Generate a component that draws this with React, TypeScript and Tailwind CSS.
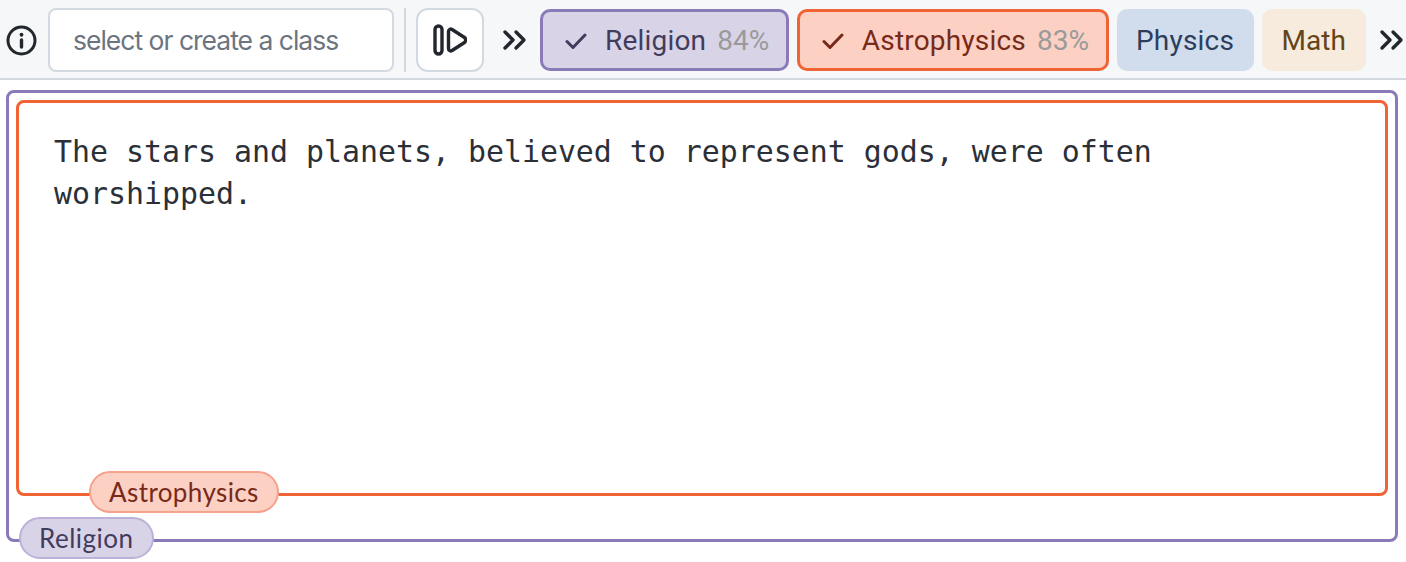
function Chevrons() {
  return (
    <svg width="26" height="22" viewBox="0 0 26 22" fill="none" stroke="#22272e" strokeWidth="3.4" strokeLinecap="round" strokeLinejoin="round" className="shrink-0">
      <path d="M3 3l8 8-8 8" />
      <path d="M14 3l8 8-8 8" />
    </svg>
  );
}

function Check({ color }: { color: string }) {
  return (
    <svg width="22" height="18" viewBox="0 0 22 18" fill="none" stroke={color} strokeWidth="3" strokeLinecap="round" strokeLinejoin="round">
      <path d="M2 9.5l6 6L20 3" />
    </svg>
  );
}

function ScoredChip({ label, score, className, checkColor }: { label: string; score: string; className: string; checkColor: string }) {
  return (
    <div className={`flex h-[62px] shrink-0 items-center rounded-[10px] border-[3px] pl-[22px] pr-[16.5px] pt-[1px] text-[28px] ${className}`}>
      <Check color={checkColor} />
      <span className="ml-[18px] tracking-[0.2px]">{label}</span>
      <span className="ml-[11px] text-[#9a9a9a]">{score}</span>
    </div>
  );
}

export default function App() {
  return (
    <div className="h-[562px] w-[1406px] overflow-hidden bg-white font-['Roboto',sans-serif]">
      <div className="flex h-[80px] items-center border-b-2 border-[#d2d8de] bg-[#f6f7f9] pl-[6px] pt-[2px]">
        <svg width="31" height="31" viewBox="0 0 31 31" fill="none" stroke="#22272e" strokeLinecap="round" className="shrink-0">
          <circle cx="15.5" cy="15.5" r="13.5" strokeWidth="3" />
          <path d="M15.5 15v7" strokeWidth="3.4" />
          <path d="M15.5 9.600v.2" strokeWidth="3.8" />
        </svg>
        <div className="ml-[11px] flex h-[64px] w-[346px] shrink-0 items-center rounded-[8px] border-2 border-[#d2d9e1] bg-white pl-[23px] pt-[1px] font-['Inter',sans-serif] text-[26.5px] tracking-[-1px] text-[#6c757f]">
          select or create a class
        </div>
        <div className="ml-[10px] h-[64px] w-[2px] shrink-0 bg-[#d2d8de]" />
        <div className="ml-[10px] flex h-[64px] w-[68px] shrink-0 items-center justify-center rounded-[12px] border-2 border-[#d2d9e1] bg-white">
          <svg width="34" height="32" viewBox="0 0 34 32" fill="none" stroke="#22272e" strokeWidth="3.4" strokeLinejoin="round">
            <rect x="2" y="2" width="7" height="28" rx="3.5" />
            <path d="M15.500 7.500c0-2 2-3 3.600-2l12.400 8c1.500 1 1.500 4 0 5l-12.400 8c-1.600 1-3.600 0-3.600-2z" />
          </svg>
        </div>
        <div className="ml-[18px] flex w-[26px] shrink-0">
          <Chevrons />
        </div>
        <div className="ml-[12px] flex shrink-0 items-center gap-[8px]">
          <ScoredChip label="Religion" score="84%" checkColor="#423c5c" className="border-[#8a7ab8] bg-[#d9d3e8] text-[#423c5c]" />
          <ScoredChip label="Astrophysics" score="83%" checkColor="#772a1a" className="border-[#f06335] bg-[#fcd0c3] text-[#772a1a]" />
          <div className="flex h-[62px] items-center rounded-[10px] bg-[#d1dded] px-[19.5px] pt-[1px] text-[28px] tracking-[0.2px] text-[#2c3e5c]">Physics</div>
          <div className="flex h-[62px] items-center rounded-[10px] bg-[#f6ebdc] px-[20px] pt-[1px] text-[28px] text-[#66441a]">Math</div>
        </div>
        <div className="ml-[13px] flex shrink-0">
          <Chevrons />
        </div>
      </div>

      <div className="relative ml-[6px] mt-[10px] h-[452px] w-[1392px] rounded-[8px] border-[3px] border-[#8a7ab8] p-[7px]">
        <div className="relative h-[396px] w-[1372px] rounded-[8px] border-[3px] border-[#f06335] px-[35px] pt-[28px] font-['DejaVu_Sans_Mono',monospace] text-[29.9px] leading-[42px] text-[#2b3038]">
          The stars and planets, believed to represent gods, were often worshipped.
          <div className="absolute bottom-[-20px] left-[70px] flex h-[42px] items-center rounded-full border-2 border-[#f7a28c] bg-[#fcd0c3] px-[18px] font-['Lato',sans-serif] text-[26px] tracking-[0.4px] text-[#772a1a]">
            Astrophysics
          </div>
        </div>
        <div className="absolute bottom-[-20px] left-[10px] flex h-[42px] items-center rounded-full border-2 border-[#bcb1d8] bg-[#d9d3e8] px-[18px] font-['Lato',sans-serif] text-[26px] tracking-[0.5px] text-[#423c5c]">
          Religion
        </div>
      </div>
    </div>
  );
}
